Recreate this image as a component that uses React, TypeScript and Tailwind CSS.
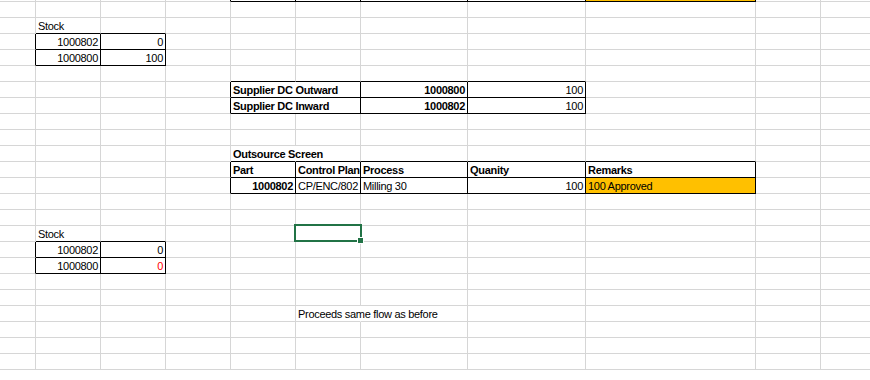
import React from "react";

type Cell = {
  t?: string;
  b?: boolean; // bold
  r?: boolean; // right aligned
  red?: boolean;
  fill?: boolean; // orange highlight
  span?: number; // merged columns
  spill?: boolean; // text runs into next cell, hide gridline
  sel?: boolean; // active cell
};

// column widths incl. right gridline
const colW = [
  "w-[36px]",
  "w-[65px]",
  "w-[65px]",
  "w-[65px]",
  "w-[65px]",
  "w-[65px]",
  "w-[107px]",
  "w-[118px]",
  "w-[170px]",
  "w-[65px]",
  "w-[200px]",
];
const ROWS = 24;

const cells: Record<string, Cell> = {
  "0-8": { fill: true },
  "2-1": { t: "Stock" },
  "3-1": { t: "1000802", r: true },
  "3-2": { t: "0", r: true },
  "4-1": { t: "1000800", r: true },
  "4-2": { t: "100", r: true },
  "6-4": { t: "Supplier DC Outward", b: true, span: 2 },
  "6-6": { t: "1000800", b: true, r: true },
  "6-7": { t: "100", r: true },
  "7-4": { t: "Supplier DC Inward", b: true, span: 2 },
  "7-6": { t: "1000802", b: true, r: true },
  "7-7": { t: "100", r: true },
  "10-4": { t: "Outsource Screen", b: true, spill: true },
  "11-4": { t: "Part", b: true },
  "11-5": { t: "Control Plan", b: true },
  "11-6": { t: "Process", b: true },
  "11-7": { t: "Quanity", b: true },
  "11-8": { t: "Remarks", b: true },
  "12-4": { t: "1000802", b: true, r: true },
  "12-5": { t: "CP/ENC/802" },
  "12-6": { t: "Milling 30" },
  "12-7": { t: "100", r: true },
  "12-8": { t: "100 Approved", fill: true },
  "15-1": { t: "Stock" },
  "15-5": { sel: true },
  "16-1": { t: "1000802", r: true },
  "16-2": { t: "0", r: true },
  "17-1": { t: "1000800", r: true },
  "17-2": { t: "0", r: true, red: true },
  "20-5": { t: "Proceeds same flow as before", spill: true },
};

// cells that carry a thin black border
const boxed = new Set<string>();
const box = (r: number, cols: number[]) => cols.forEach((c) => boxed.add(`${r}-${c}`));
box(0, [4, 5, 6, 7, 8]);
box(3, [1, 2]);
box(4, [1, 2]);
box(6, [4, 5, 6, 7]);
box(7, [4, 5, 6, 7]);
box(11, [4, 5, 6, 7, 8]);
box(12, [4, 5, 6, 7, 8]);
box(16, [1, 2]);
box(17, [1, 2]);

const isBoxed = (r: number, c: number) => boxed.has(`${r}-${c}`);

function SheetRow({ r }: { r: number }) {
  const out: React.ReactNode[] = [];
  for (let c = 0; c < colW.length; c++) {
    const cell = cells[`${r}-${c}`];
    const span = cell?.span ?? 1;
    const last = c + span - 1;
    const width = span === 2 ? "w-[130px]" : colW[c];

    const right = cell?.spill
      ? "border-r-transparent"
      : isBoxed(r, last) || isBoxed(r, last + 1)
      ? "border-r-black"
      : "border-r-[#d6d6d6]";
    const bottom =
      isBoxed(r, c) || isBoxed(r + 1, c) ? "border-b-black" : "border-b-[#d6d6d6]";

    out.push(
      <div
        key={c}
        className={`relative shrink-0 border-r border-b ${width} ${right} ${bottom} ${
          cell?.fill ? "bg-[#ffc000]" : ""
        }`}
      >
        {cell?.t && (
          <div
            className={`whitespace-nowrap px-[2px] pt-px leading-[15px] ${
              cell.r ? "text-right" : "text-left"
            } ${cell.b ? "font-bold" : ""} ${cell.red ? "text-[#ff0000]" : "text-black"}`}
          >
            {cell.t}
          </div>
        )}
        {cell?.sel && (
          <>
            <div className="absolute left-[-2px] top-[-2px] z-10 h-[18px] w-[68px] border-2 border-[#217346]" />
            <div className="absolute left-[62px] top-[12px] z-20 h-[5px] w-[5px] bg-[#217346] outline outline-1 outline-white" />
          </>
        )}
      </div>
    );
    c = last;
  }
  return <div className={`flex ${r === 0 ? "h-[2px]" : "h-4"}`}>{out}</div>;
}

export default function App() {
  return (
    <div className="h-[380px] w-[870px] overflow-hidden bg-white font-['Liberation_Sans',Arial,sans-serif] text-[11px] tracking-[-0.3px]">
      {Array.from({ length: ROWS }, (_, r) => (
        <SheetRow key={r} r={r} />
      ))}
    </div>
  );
}
